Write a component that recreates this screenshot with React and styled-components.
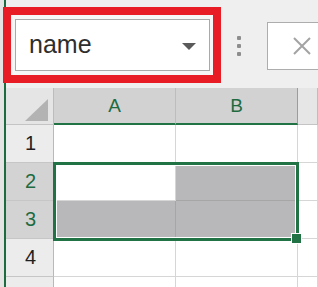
import React from "react";
import styled, { createGlobalStyle } from "styled-components";

const GlobalStyle = createGlobalStyle`
  html, body {
    margin: 0;
    padding: 0;
    background: #e6e6e6;
    font-family: "Liberation Sans", Arial, sans-serif;
  }
`;

const green = "#217346";

const Page = styled.div`
  width: 318px;
  height: 287px;
  overflow: hidden;
  padding-left: 4px;
  box-sizing: border-box;
  background: #e4e4e4;
`;

const Window = styled.div`
  height: 100%;
  border-left: 2px solid #1d6b40;
  background: #efefef;
  display: flex;
  flex-direction: column;
`;

const Toolbar = styled.div`
  height: 88px;
  flex-shrink: 0;
  display: flex;
  align-items: flex-start;
`;

// red annotation box drawn around the name box
const Highlight = styled.div`
  margin: 7px 0 0 -3px;
  width: 218px;
  height: 76px;
  box-sizing: border-box;
  border: 8px solid #e81c24;
  background: #f6f6f6;
  padding: 4px 3px 4px 4px;
`;

const NameBox = styled.div`
  height: 100%;
  box-sizing: border-box;
  border: 1px solid #a9a9a9;
  background: #fff;
  display: flex;
  align-items: center;
  justify-content: space-between;
  padding: 0 13px 0 13px;
`;

const NameText = styled.span`
  font-size: 25px;
  color: #2e2e2e;
  padding-bottom: 2px;
`;

const Caret = styled.span`
  width: 0;
  height: 0;
  border-left: 7px solid transparent;
  border-right: 7px solid transparent;
  border-top: 7px solid #5a5a5a;
  margin-top: 2px;
`;

const Dots = styled.div`
  display: flex;
  flex-direction: column;
  gap: 4px;
  margin: 36px 0 0 16px;
`;

const Dot = styled.span`
  width: 4px;
  height: 4px;
  border-radius: 1px;
  background: #8d8d8d;
`;

const FormulaBox = styled.div`
  margin: 22px 0 0 26px;
  flex: 1;
  height: 48px;
  box-sizing: border-box;
  border: 1px solid #adadad;
  border-right: none;
  background: #fff;
  display: flex;
  align-items: center;
  padding-left: 24px;
`;

const Grid = styled.div`
  position: relative;
  display: grid;
  grid-template-columns: 48px 122px 122px 1fr;
  grid-template-rows: 37px repeat(5, 38px);
  background: #fff;
`;

const Corner = styled.div`
  background: #e5e5e5;
  border-right: 1px solid #bcbcbc;
  border-bottom: 1px solid #c4c4c4;
  display: flex;
  align-items: flex-end;
  justify-content: flex-end;
  padding: 0 5px 3px 0;
`;

const ColHead = styled.div`
  display: flex;
  align-items: center;
  justify-content: center;
  font-size: 19px;
  color: #1e6b41;
  background: ${(p) => (p.$selected ? "#d2d2d2" : "#e6e6e6")};
  border-right: 1px solid ${(p) => (p.$edge ? "#9c9c9c" : "#bdbdbd")};
  border-bottom: ${(p) => (p.$selected ? `2px solid ${green}` : "1px solid #c4c4c4")};
  padding-top: 1px;
`;

const RowHead = styled.div`
  display: flex;
  align-items: center;
  justify-content: center;
  font-size: 20px;
  color: ${(p) => (p.$selected ? "#1e6b41" : "#1f1f1f")};
  background: ${(p) => (p.$selected ? "#d3d3d3" : "#ececec")};
  border-right: 1px solid #b9b9b9;
  border-bottom: 1px solid #c6c6c6;
  padding-left: 2px;
`;

const Cell = styled.div`
  background: ${(p) => (p.$filled ? "#b8b8ba" : "#fff")};
  border-right: 1px solid ${(p) => (p.$filled ? "#a6a6a6" : "#d6d6d6")};
  border-bottom: 1px solid ${(p) => (p.$filled ? "#a6a6a6" : "#d6d6d6")};
`;

const Selection = styled.div`
  position: absolute;
  left: 47px;
  top: 74px;
  width: 246px;
  height: 79px;
  box-sizing: border-box;
  border: 3px solid ${green};
  box-shadow: inset 0 0 0 1px #fff;
  pointer-events: none;
`;

const FillHandle = styled.span`
  position: absolute;
  right: -6px;
  bottom: -6px;
  width: 11px;
  height: 11px;
  box-sizing: border-box;
  background: ${green};
  border: 1px solid #fff;
`;

const columns = [
  { label: "A", selected: true },
  { label: "B", selected: true, edge: true },
  { label: "", selected: false },
];

// row 5 is only partly in view, its number falls below the edge
const rows = [
  { n: 1, label: "1", selected: false, filled: [false, false, false] },
  { n: 2, label: "2", selected: true, filled: [false, true, false] },
  { n: 3, label: "3", selected: true, filled: [true, true, false] },
  { n: 4, label: "4", selected: false, filled: [false, false, false] },
  { n: 5, label: "", selected: false, filled: [false, false, false] },
];

export default function App() {
  return (
    <>
      <GlobalStyle />
      <Page>
        <Window>
          <Toolbar>
            <Highlight>
              <NameBox>
                <NameText>name</NameText>
                <Caret />
              </NameBox>
            </Highlight>
            <Dots>
              <Dot />
              <Dot />
              <Dot />
            </Dots>
            <FormulaBox>
              <svg width="20" height="18" viewBox="0 0 20 18">
                <path d="M2 1 L18 17 M18 1 L2 17" stroke="#a3a3a3" strokeWidth="2" fill="none" />
              </svg>
            </FormulaBox>
          </Toolbar>
          <Grid>
            <Corner>
              <svg width="23" height="22" viewBox="0 0 23 22">
                <polygon points="23,0 23,22 0,22" fill="#b3b3b3" />
              </svg>
            </Corner>
            {columns.map((c, i) => (
              <ColHead key={i} $selected={c.selected} $edge={c.edge}>
                {c.label}
              </ColHead>
            ))}
            {rows.map((r) => (
              <React.Fragment key={r.n}>
                <RowHead $selected={r.selected}>{r.label}</RowHead>
                {r.filled.map((f, i) => (
                  <Cell key={i} $filled={f} />
                ))}
              </React.Fragment>
            ))}
            <Selection>
              <FillHandle />
            </Selection>
          </Grid>
        </Window>
      </Page>
    </>
  );
}
